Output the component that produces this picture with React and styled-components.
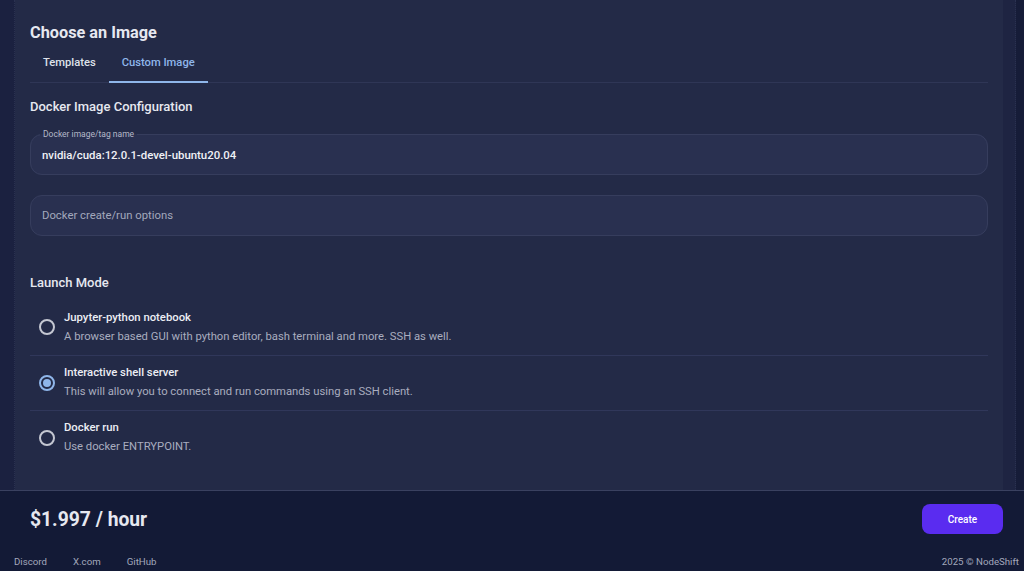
import styled, { createGlobalStyle } from "styled-components"

const GlobalStyle = createGlobalStyle`
    body {
        margin: 0;
        background: #131a36;
        font-family: Roboto, "Liberation Sans", sans-serif;
        color: #e4e6ee;
    }
`

const Page = styled.div`
    height: 571px;
    display: flex;
    flex-direction: column;
    overflow: hidden;
`
const Main = styled.div`
    height: 490px;
    display: flex;
    background: #161c38;
`
const Gutter = styled.div`
    width: 15px;
    background: #1b2140;
    border-right: 1px dotted #2a3150;
    box-sizing: border-box;
`
const Card = styled.div`
    flex: 1;
    background: #232a47;
    padding: 22px 15px 0 15px;
`
const Track = styled.div`
    width: 12px;
    background: #1e2442;
    border-right: 1px dotted #2a3150;
    margin-right: 8px;
`
const Title = styled.h2`
    margin: 0;
    font-size: 16.3px;
    line-height: 21px;
    font-weight: 700;
    color: #e6e8f0;
`
const Tabs = styled.div`
    display: flex;
    height: 39px;
    border-bottom: 1px solid #2f3656;
`
const Tab = styled.div`
    padding: 0 13px;
    display: flex;
    align-items: center;
    font-size: 11.2px;
    font-weight: 500;
    color: ${(p) => (p.active ? "#8fb6ea" : "#dfe2ea")};
    border-bottom: 2px solid ${(p) => (p.active ? "#8fb6ea" : "transparent")};
    margin-bottom: -1px;
`
const SectionTitle = styled.h3`
    margin: ${(p) => p.top}px 0 0 0;
    font-size: 13px;
    line-height: 18px;
    font-weight: 500;
    color: #e6e8f0;
`
const Field = styled.fieldset`
    margin: 13px 0 0 0;
    padding: 0 11px;
    height: 46px;
    box-sizing: border-box;
    border: 1px solid #363d5d;
    border-radius: 12px;
    background: #293050;
    display: flex;
    align-items: center;
`
const Legend = styled.legend`
    font-size: 8.5px;
    color: #b4b8c8;
    padding: 0 3px;
    margin-left: -2px;
    line-height: 10px;
`
const Value = styled.div`
    font-size: 11.4px;
    font-weight: 500;
    color: #f0f1f6;
    margin-top: -4px;
`
const Input = styled.div`
    margin-top: 20px;
    height: 41px;
    box-sizing: border-box;
    border: 1px solid #363d5d;
    border-radius: 12px;
    background: #293050;
    display: flex;
    align-items: center;
    padding: 0 11px;
    font-size: 11.3px;
    color: #a3a8bc;
`
const Options = styled.div`
    margin-top: 8px;
`
const Option = styled.div`
    display: flex;
    align-items: center;
    gap: 9px;
    padding: 9px 9px 10px 9px;
    height: 55px;
    box-sizing: border-box;
    border-top: ${(p) => (p.first ? "none" : "1px solid #30375a")};
`
const Radio = styled.span`
    width: 16px;
    height: 16px;
    box-sizing: border-box;
    border-radius: 50%;
    border: 2px solid ${(p) => (p.checked ? "#8fb6ea" : "#c4c7d2")};
    display: flex;
    align-items: center;
    justify-content: center;
    flex-shrink: 0;
    &::after {
        content: "";
        width: 8px;
        height: 8px;
        border-radius: 50%;
        background: ${(p) => (p.checked ? "#8fb6ea" : "transparent")};
    }
`
const OptionText = styled.div`
    display: flex;
    flex-direction: column;
    gap: 3px;
`
const OptionTitle = styled.div`
    font-size: 11.3px;
    line-height: 16px;
    font-weight: 500;
    color: #eceef4;
`
const OptionDesc = styled.div`
    font-size: 11.25px;
    line-height: 16px;
    color: #a9adbf;
`
const Footer = styled.div`
    border-top: 1px solid #3a4160;
    background: #131a36;
    flex: 1;
    display: flex;
    flex-direction: column;
`
const PriceRow = styled.div`
    height: 56px;
    display: flex;
    align-items: center;
    justify-content: space-between;
    padding: 0 21px 0 30px;
`
const Price = styled.div`
    font-size: 19.3px;
    font-weight: 700;
    color: #e6e8f0;
`
const Button = styled.a`
    width: 81px;
    height: 30px;
    border-radius: 8px;
    background: #5a2cf0;
    color: #fff;
    font-size: 10px;
    font-weight: 500;
    display: flex;
    align-items: center;
    justify-content: center;
    text-decoration: none;
`
const LinksRow = styled.div`
    display: flex;
    align-items: center;
    justify-content: space-between;
    padding: 0 5px 0 14px;
    height: 18px;
    margin-top: 5px;
    font-size: 9.7px;
    color: #a3a8bc;
`
const Links = styled.div`
    display: flex;
    gap: 26px;
`

const modes = [
    { title: "Jupyter-python notebook", desc: "A browser based GUI with python editor, bash terminal and more. SSH as well." },
    { title: "Interactive shell server", desc: "This will allow you to connect and run commands using an SSH client.", checked: true },
    { title: "Docker run", desc: "Use docker ENTRYPOINT." },
]

export default function App() {
    return (
        <Page>
            <GlobalStyle />
            <Main>
                <Gutter />
                <Card>
                    <Title>Choose an Image</Title>
                    <Tabs>
                        <Tab>Templates</Tab>
                        <Tab active>Custom Image</Tab>
                    </Tabs>
                    <SectionTitle top={15}>Docker Image Configuration</SectionTitle>
                    <Field>
                        <Legend>Docker image/tag name</Legend>
                        <Value>nvidia/cuda:12.0.1-devel-ubuntu20.04</Value>
                    </Field>
                    <Input>Docker create/run options</Input>
                    <SectionTitle top={38}>Launch Mode</SectionTitle>
                    <Options>
                        {modes.map((m, i) => (
                            <Option key={m.title} first={i === 0}>
                                <Radio checked={m.checked} />
                                <OptionText>
                                    <OptionTitle>{m.title}</OptionTitle>
                                    <OptionDesc>{m.desc}</OptionDesc>
                                </OptionText>
                            </Option>
                        ))}
                    </Options>
                </Card>
                <Track />
            </Main>
            <Footer>
                <PriceRow>
                    <Price>$1.997 / hour</Price>
                    <Button href="#">Create</Button>
                </PriceRow>
                <LinksRow>
                    <Links>
                        <span>Discord</span>
                        <span>X.com</span>
                        <span>GitHub</span>
                    </Links>
                    <span>2025 © NodeShift</span>
                </LinksRow>
            </Footer>
        </Page>
    )
}
